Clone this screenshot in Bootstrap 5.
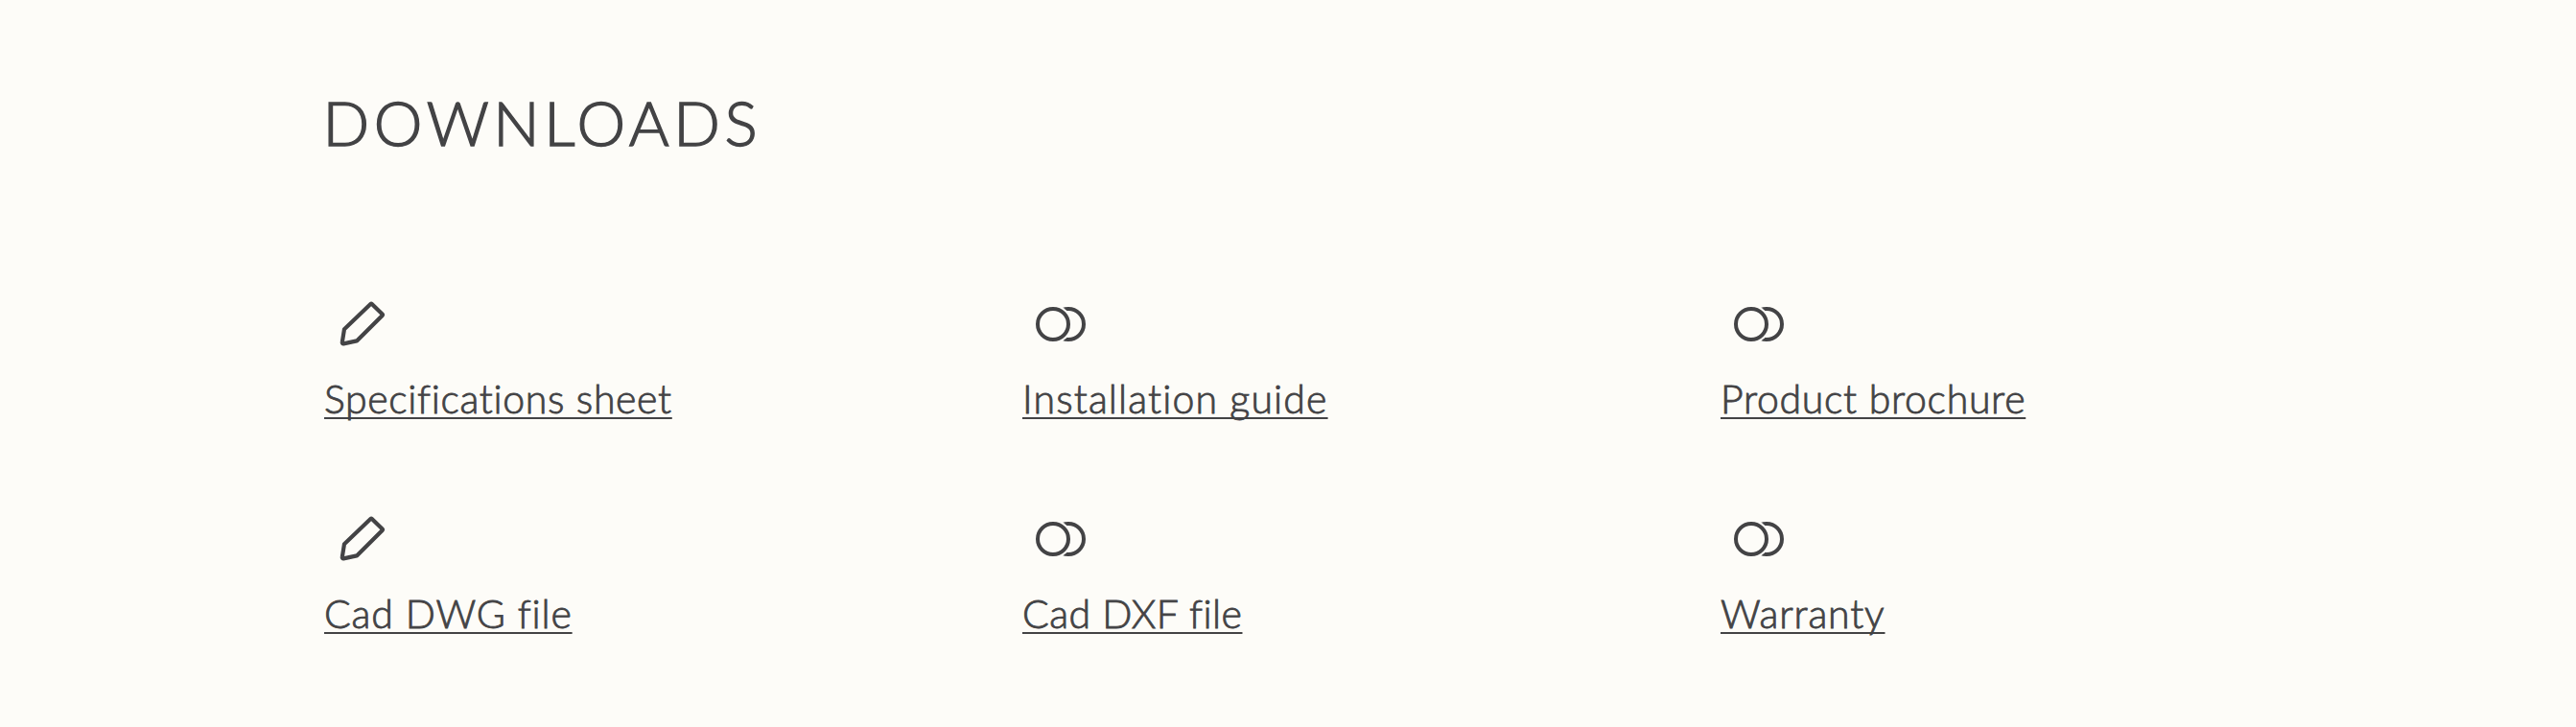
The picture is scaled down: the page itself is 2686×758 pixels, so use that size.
<!DOCTYPE html>
<html lang="en">
<head>
<meta charset="utf-8">
<title>Downloads</title>
<link href="https://cdn.jsdelivr.net/npm/bootstrap@5.3.0/dist/css/bootstrap.min.css" rel="stylesheet">
<style>
body{background:#fdfcf8;color:#434345;font-family:Lato,"Open Sans",sans-serif;font-weight:300;-webkit-text-stroke:.85px #434345}
.downloads{width:2522px;padding:89px 0 0 338px}
.downloads h2{font-size:64px;line-height:77px;font-weight:300;letter-spacing:4.6px;margin:0 0 132px -1.5px;-webkit-text-stroke-width:1.4px}
.download-grid{row-gap:81px}
.download-icon{width:80px;height:80px;margin-bottom:13px;fill:none;stroke:currentColor;stroke-width:2}
.download-link{font-size:41px;line-height:50px;color:inherit;letter-spacing:var(--track);white-space:nowrap;text-decoration:underline 2px;text-underline-offset:4px;text-decoration-skip-ink:none}
.download-link:hover{color:inherit}
.track-spec{--track:.65px}.track-install{--track:1.13px}.track-product{--track:.7px}
.track-dwg{--track:.84px}.track-dxf{--track:.48px}.track-warranty{--track:.84px}
</style>
</head>
<body>
<svg class="d-none">
<symbol id="pencil" viewBox="0 0 40 40"><path stroke-width="2.1" stroke-linejoin="round" d="M24.9 9.5 30.3 14.8a.5.5 0 0 1 0 .7L17 28.7l-6.9 1.5a.6.6 0 0 1-.7-.7l1.1-6.9L24.2 9.5a.5.5 0 0 1 .7 0Z"/></symbol>
<symbol id="rings" viewBox="0 0 40 40"><circle cx="24" cy="20" r="8"/><circle cx="16" cy="20" r="10" fill="#fdfcf8" stroke="none"/><circle cx="16" cy="20" r="8"/></symbol>
</svg>
<section class="downloads">
<h2>DOWNLOADS</h2>
<div class="row g-0 download-grid">
<div class="col-4 d-flex flex-column align-items-start"><svg class="download-icon"><use href="#pencil"/></svg><a class="download-link track-spec" href="#">Specifications sheet</a></div>
<div class="col-4 d-flex flex-column align-items-start"><svg class="download-icon"><use href="#rings"/></svg><a class="download-link track-install" href="#">Installation guide</a></div>
<div class="col-4 d-flex flex-column align-items-start"><svg class="download-icon"><use href="#rings"/></svg><a class="download-link track-product" href="#">Product brochure</a></div>
<div class="col-4 d-flex flex-column align-items-start"><svg class="download-icon"><use href="#pencil"/></svg><a class="download-link track-dwg" href="#">Cad DWG file</a></div>
<div class="col-4 d-flex flex-column align-items-start"><svg class="download-icon"><use href="#rings"/></svg><a class="download-link track-dxf" href="#">Cad DXF file</a></div>
<div class="col-4 d-flex flex-column align-items-start"><svg class="download-icon"><use href="#rings"/></svg><a class="download-link track-warranty" href="#">Warranty</a></div>
</div>
</section>
<script src="https://cdn.jsdelivr.net/npm/bootstrap@5.3.0/dist/js/bootstrap.bundle.min.js"></script>
</body>
</html>
